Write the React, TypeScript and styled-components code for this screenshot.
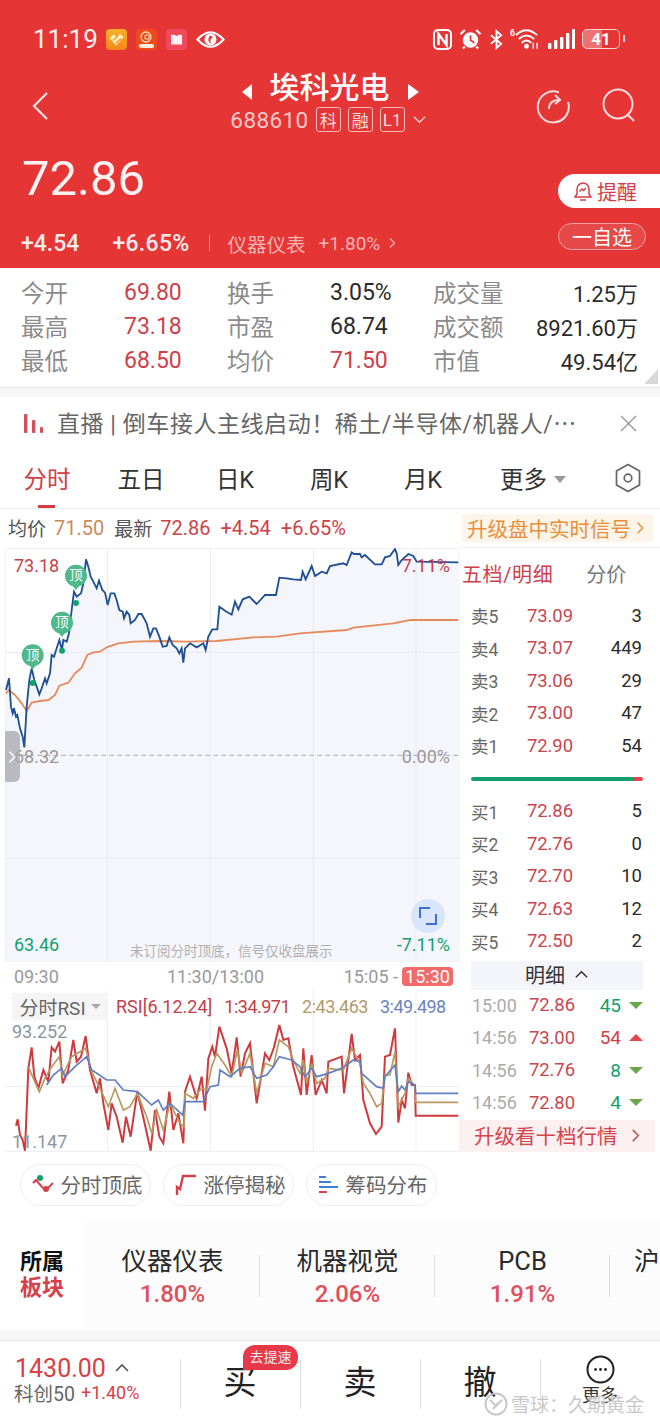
import React from "react";
import styled, { createGlobalStyle } from "styled-components";

const RED = "#e53535";
const UP = "#cf3f49";
const GREEN = "#13a06c";

const GlobalStyle = createGlobalStyle`
  html, body { margin: 0; padding: 0; background: #fff; }
  body { font-family: Roboto, "Noto Sans CJK SC", sans-serif; }
  * { box-sizing: border-box; }
`;

const Page = styled.div`
  position: relative;
  width: 660px;
  height: 1425px;
  overflow: hidden;
  background: #fff;
`;

/* ---- red header ---- */
const Header = styled.header`
  height: 268px;
  background: ${RED};
  color: #fff;
`;

const StatusBar = styled.div`
  height: 70px;
  padding: 8px 40px 0 33px;
  display: flex;
  align-items: center;
  justify-content: space-between;
`;

const StatusGroup = styled.div<{ $gap?: number }>`
  display: flex;
  align-items: center;
  gap: ${(p) => p.$gap ?? 9}px;
`;

const Clock = styled.span`
  font-size: 26px;
  color: #fdeeee;
  margin-right: -1px;
`;

const Battery = styled.div`
  position: relative;
  width: 38px;
  height: 20px;
  border: 1.5px solid #f8d5d5;
  border-radius: 5px;
  display: flex;
  align-items: center;
  justify-content: center;
  font-size: 17px;
  font-weight: 700;
  background: linear-gradient(90deg, rgba(255, 255, 255, 0.3) 52%, transparent 52%);
  &::after {
    content: "";
    position: absolute;
    right: -6px;
    top: 5px;
    width: 2px;
    height: 7px;
    background: #f8d5d5;
  }
`;

const NavRow = styled.div`
  height: 66px;
  display: grid;
  grid-template-columns: 200px 1fr 130px;
  align-items: center;
`;

const BackWrap = styled.div`
  padding-left: 32px;
  padding-top: 6px;
  display: flex;
`;

const TitleBlock = styled.div`
  display: flex;
  flex-direction: column;
  align-items: center;
  margin-left: -70px;
  margin-top: -3px;
`;

const TitleLine = styled.div`
  display: flex;
  align-items: center;
  gap: 18px;
  height: 36px;
  font-size: 30px;
  font-weight: 500;
  line-height: 36px;
`;

const Arrow = styled.span<{ $right?: boolean }>`
  width: 0;
  height: 0;
  margin-top: 8px;
  border-top: 8px solid transparent;
  border-bottom: 8px solid transparent;
  ${(p) => (p.$right ? "border-left: 11px solid #fff;" : "border-right: 10px solid #fff;")}
`;

const CodeLine = styled.div`
  display: flex;
  align-items: center;
  gap: 7px;
  height: 28px;
  margin-left: -3px;
  font-size: 22.5px;
  color: #f8c9c9;
  letter-spacing: 0.4px;
`;

const Tag = styled.span`
  display: inline-flex;
  align-items: center;
  justify-content: center;
  width: 25px;
  height: 25px;
  border: 1px solid #f5bcbc;
  border-radius: 3px;
  font-size: 17px;
  letter-spacing: 0;
  color: #fbdcdc;
`;

const NavIcons = styled.div`
  display: flex;
  justify-content: flex-end;
  gap: 30px;
  padding-right: 23px;
  padding-top: 6px;
`;

const QuoteRow = styled.div`
  display: flex;
  justify-content: space-between;
  height: 132px;
`;

const QuoteLeft = styled.div`
  padding-left: 21px;
  display: flex;
  flex-direction: column;
`;

const BigPrice = styled.div`
  height: 84px;
  font-size: 49px;
  line-height: 86px;
  padding-left: 1px;
  color: #fdf2f2;
`;

const ChangeLine = styled.div`
  display: flex;
  align-items: center;
  height: 46px;
  font-size: 23px;
  font-weight: 500;
  color: #fbeaea;
`;

const ChangeValue = styled.span`
  margin-right: 33px;
  &:nth-child(2) {
    margin-right: 19px;
    letter-spacing: 0.3px;
  }
`;

const Divider = styled.span`
  width: 1px;
  height: 16px;
  background: #f09a9a;
  margin-right: 18px;
`;

const SectorName = styled.span`
  font-size: 19.5px;
  font-weight: 400;
  color: #f6b4b4;
  margin-right: 13px;
`;

const SectorChange = styled.span`
  font-size: 19px;
  font-weight: 400;
  color: #f6b4b4;
  margin-right: 7px;
`;

const QuoteRight = styled.div`
  width: 102px;
  padding-top: 38px;
  display: flex;
  flex-direction: column;
`;

const RemindButton = styled.div`
  height: 34px;
  background: #fff;
  border-radius: 17px 0 0 17px;
  display: flex;
  align-items: center;
  padding-left: 15px;
  gap: 4px;
  font-size: 20px;
  color: #cf3f49;
`;

const WatchButton = styled.div`
  margin-top: 15px;
  width: 88px;
  height: 27px;
  border: 1px solid #f3a3a3;
  border-radius: 14px;
  background: rgba(255, 255, 255, 0.1);
  display: flex;
  align-items: center;
  justify-content: center;
  font-size: 20px;
  color: #fff;
`;

/* ---- stats table ---- */
const StatsGrid = styled.section`
  position: relative;
  height: 120px;
  padding: 7px 22px 0 21px;
  display: grid;
  grid-template-columns: 103px 103px 103px 103px auto 1fr;
  grid-auto-rows: 34px;
  align-items: center;
  border-bottom: 1px solid #e9e9e9;
`;

const StatLabel = styled.span`
  font-size: 23.5px;
  color: #8b8b8b;
`;

const StatValue = styled.span<{ $up?: boolean; $end?: boolean }>`
  font-size: ${(p) => (p.$end ? 22 : 23)}px;
  color: ${(p) => (p.$up ? UP : "#2b2b2b")};
  text-align: ${(p) => (p.$end ? "right" : "left")};
  white-space: nowrap;
`;

const CornerMark = styled.span`
  position: absolute;
  right: 2px;
  bottom: 3px;
  width: 14px;
  height: 15px;
  background: #d9d9d9;
  clip-path: polygon(100% 0, 100% 100%, 0 100%);
`;

const Band = styled.div<{ $h: number }>`
  height: ${(p) => p.$h}px;
  background: #f6f6f6;
`;

/* ---- live banner ---- */
const LiveBanner = styled.section`
  height: 53px;
  padding: 0 23px 0 24px;
  display: flex;
  align-items: center;
  font-size: 23px;
  color: #666;
`;

const LiveText = styled.span`
  margin-left: 14px;
  margin-top: -3px;
  flex: 1;
  white-space: nowrap;
  letter-spacing: 0.55px;
`;

/* ---- tabs ---- */
const Tabs = styled.nav`
  height: 59px;
  display: flex;
  align-items: stretch;
  border-bottom: 1px solid #ececec;
`;

const Tab = styled.div<{ $active?: boolean; $w?: number }>`
  position: relative;
  width: ${(p) => p.$w ?? 94}px;
  display: flex;
  align-items: center;
  justify-content: center;
  gap: 7px;
  padding-bottom: 2px;
  font-size: 23.5px;
  color: ${(p) => (p.$active ? "#d23d46" : "#333")};
  ${(p) =>
    p.$active &&
    `&::after {
      content: "";
      position: absolute;
      left: 38px;
      bottom: 0;
      width: 17px;
      height: 3px;
      background: #d23d46;
    }`}
`;

const MoreCaret = styled.span`
  width: 0;
  height: 0;
  border-left: 6px solid transparent;
  border-right: 6px solid transparent;
  border-top: 7px solid #999;
  margin-top: 2px;
`;

/* ---- quote summary strip ---- */
const InfoRow = styled.div`
  height: 39px;
  display: flex;
  align-items: center;
  padding: 0 7px 2px 8px;
`;

const InfoLabel = styled.span`
  font-size: 19px;
  color: #555;
  margin-right: 8px;
`;

const InfoValue = styled.span<{ $tone?: string }>`
  font-size: 20px;
  color: ${(p) => p.$tone ?? UP};
  margin-right: 10px;
`;

const SignalBanner = styled.div`
  margin-left: auto;
  width: 191px;
  height: 28px;
  background: #fdf4ea;
  display: flex;
  align-items: center;
  justify-content: center;
  gap: 3px;
  font-size: 20.5px;
  color: #e88f3a;
`;

/* ---- main split ---- */
const Main = styled.section`
  display: flex;
  height: 604px;
`;

const LeftColumn = styled.div`
  width: 460px;
  display: flex;
  flex-direction: column;
`;

const ChartBox = styled.div`
  position: relative;
  height: 414px;
`;

const PlotSvg = styled.svg`
  display: block;
  font-family: Roboto, "Noto Sans CJK SC", sans-serif;
`;

const AxisLabel = styled.span<{ $left?: number; $right?: number; $top: number; $tone: string }>`
  position: absolute;
  top: ${(p) => p.$top}px;
  ${(p) => (p.$left !== undefined ? `left: ${p.$left}px;` : `right: ${p.$right}px;`)}
  font-size: 18px;
  line-height: 20px;
  color: ${(p) => p.$tone};
`;

const ChartNote = styled.span`
  position: absolute;
  left: 130px;
  bottom: 2px;
  font-size: 13.5px;
  line-height: 18px;
  color: #b0b0b0;
  white-space: nowrap;
`;

const ExpandButton = styled.span`
  position: absolute;
  left: 411px;
  top: 351px;
  width: 34px;
  height: 34px;
  border-radius: 50%;
  background: #d8e5fa;
  display: flex;
  align-items: center;
  justify-content: center;
`;

const SideHandle = styled.span`
  position: absolute;
  left: 5px;
  top: 183px;
  width: 15px;
  height: 51px;
  border-radius: 0 6px 6px 0;
  background: rgba(170, 170, 178, 0.8);
  display: flex;
  align-items: center;
  justify-content: center;
`;

const TimeRow = styled.div`
  height: 28px;
  padding: 0 7px 0 14px;
  display: grid;
  grid-template-columns: 153px 1fr auto;
  align-items: center;
  font-size: 18px;
  color: #999;
`;

const TimeEnd = styled.span`
  display: flex;
  align-items: center;
  gap: 4px;
`;

const TimeBadge = styled.span`
  width: 51px;
  height: 19px;
  border-radius: 4px;
  background: #f36a6a;
  color: #fff;
  text-align: center;
  line-height: 19px;
`;

const RsiBox = styled.div`
  position: relative;
  height: 162px;
`;

const RsiLegend = styled.div`
  position: absolute;
  left: 12px;
  top: 3px;
  display: flex;
  align-items: center;
  font-size: 18px;
`;

const RsiSelect = styled.span`
  width: 96px;
  height: 27px;
  background: #f5f5f5;
  color: #666;
  font-size: 19px;
  display: flex;
  align-items: center;
  justify-content: center;
  gap: 5px;
  margin-right: 8px;
`;

const SmallCaret = styled.span`
  width: 0;
  height: 0;
  border-left: 5px solid transparent;
  border-right: 5px solid transparent;
  border-top: 5px solid #aaa;
`;

const LegendItem = styled.span<{ $tone: string; $tight?: boolean }>`
  color: ${(p) => p.$tone};
  margin-right: 12px;
  letter-spacing: ${(p) => (p.$tight ? "-0.5px" : "0")};
  white-space: nowrap;
`;

/* ---- order book column ---- */
const RightColumn = styled.div`
  width: 200px;
  display: flex;
  flex-direction: column;
  border-top: 1px solid #f2f2f2;
  margin-top: -1px;
`;

const BookTabs = styled.div`
  height: 52px;
  padding: 0 0 2px 2px;
  display: flex;
  align-items: center;
  gap: 33px;
`;

const BookTab = styled.span<{ $active?: boolean }>`
  font-size: 20px;
  color: ${(p) => (p.$active ? "#cf3f49" : "#777")};
  letter-spacing: ${(p) => (p.$active ? "0.6px" : "0")};
`;

const BookRow = styled.div`
  height: 32.5px;
  margin: 0 18px 0 12px;
  padding-bottom: 1px;
  display: grid;
  grid-template-columns: 55px 1fr auto;
  align-items: center;
`;

const BookLabel = styled.span`
  font-size: 17.5px;
  margin-left: -1px;
  color: #666;
`;

const BookPrice = styled.span`
  font-size: 18.5px;
  letter-spacing: -0.1px;
  color: #c9464f;
`;

const BookQty = styled.span`
  font-size: 18.5px;
  color: #2b2b2b;
`;

const RatioBar = styled.div`
  height: 4px;
  margin: 14px 17px 15px 11px;
  border-radius: 2px;
  background: linear-gradient(90deg, ${GREEN} 95%, #e0464f 95%);
`;

const DetailHeader = styled.div`
  height: 29px;
  margin: 3px 17px 0 11px;
  padding-bottom: 3px;
  background: #f4f5fb;
  display: flex;
  align-items: center;
  justify-content: center;
  gap: 9px;
  font-size: 20px;
  color: #333;
`;

const TradeRow = styled.div`
  height: 32.5px;
  margin: 0 17px 0 12px;
  padding-bottom: 2px;
  display: grid;
  grid-template-columns: 57px 1fr auto 22px;
  align-items: center;
`;

const TradeTime = styled.span`
  font-size: 18px;
  color: #aaa;
`;

const TradeQty = styled.span<{ $up?: boolean }>`
  font-size: 19px;
  color: ${(p) => (p.$up ? UP : GREEN)};
`;

const TradeMark = styled.span<{ $up?: boolean }>`
  justify-self: end;
  width: 0;
  height: 0;
  border-left: 7px solid transparent;
  border-right: 7px solid transparent;
  ${(p) => (p.$up ? "border-bottom: 7px solid #e8444c;" : "border-top: 7px solid #6aa84a;")}
`;

const UpgradeRow = styled.div`
  height: 32px;
  margin-top: auto;
  margin-right: 5px;
  margin-left: -1px;
  padding: 0 11px 2px 15px;
  background: #fdf0f1;
  display: flex;
  align-items: center;
  justify-content: space-between;
  font-size: 20.5px;
  color: #d2454e;
`;

/* ---- chips ---- */
const ChipRow = styled.div`
  height: 70px;
  padding: 12px 0 0 20px;
  display: flex;
  gap: 12px;
  align-items: flex-start;
`;

const Chip = styled.div`
  width: 131px;
  height: 42px;
  border: 1px solid #eeeeee;
  border-radius: 21px;
  display: flex;
  align-items: center;
  justify-content: center;
  gap: 7px;
  padding: 0 0 3px 3px;
  font-size: 20.5px;
  color: #666;
`;

/* ---- sector strip ---- */
const SectorStrip = styled.section`
  height: 108px;
  display: flex;
  overflow: hidden;
`;

const SectorHead = styled.div`
  width: 85px;
  padding: 27px 0 0 20px;
  font-size: 22px;
  line-height: 26px;
  font-weight: 700;
  color: #111;
`;

const SectorHeadAccent = styled.div`
  color: #d6404a;
`;

const SectorList = styled.div`
  flex: 1;
  display: flex;
  background: #fcfcfd;
  overflow: hidden;
`;

const SectorItem = styled.div`
  position: relative;
  flex: 0 0 175px;
  display: flex;
  flex-direction: column;
  align-items: center;
  padding-top: 22px;
  &:not(:last-child)::after {
    content: "";
    position: absolute;
    right: 0;
    top: 33px;
    width: 1px;
    height: 42px;
    background: #dddddd;
  }
`;

const SectorItemName = styled.div`
  height: 34px;
  font-size: 25.5px;
  line-height: 34px;
  color: #2a2a2a;
  white-space: nowrap;
`;

const SectorItemChange = styled.div`
  height: 32px;
  font-size: 24px;
  font-weight: 500;
  line-height: 32px;
  color: #e0505a;
`;

const LastSector = styled.div`
  flex: 1;
  padding: 22px 0 0 24px;
  font-size: 25.5px;
  line-height: 34px;
  color: #2a2a2a;
`;

/* ---- bottom bar ---- */
const BottomBar = styled.footer`
  height: 85px;
  display: flex;
  border-top: 1px solid #e8e8e8;
`;

const IndexBlock = styled.div`
  width: 180px;
  padding: 12px 0 0 15px;
`;

const IndexLine = styled.div`
  display: flex;
  align-items: center;
  gap: 8px;
  height: 30px;
  font-size: 25px;
  color: #d94040;
`;

const IndexSub = styled.div`
  display: flex;
  align-items: center;
  gap: 6px;
  height: 24px;
  margin: -3px 0 0 -1px;
  font-size: 19.5px;
  color: #666;
`;

const IndexChange = styled.span`
  font-size: 18px;
  color: #d6404a;
`;

const ActionCell = styled.div`
  position: relative;
  flex: 1;
  display: flex;
  flex-direction: column;
  align-items: center;
  justify-content: center;
  padding-bottom: 6px;
  font-size: 33px;
  color: #222;
  &::before {
    content: "";
    position: absolute;
    left: 0;
    top: 18px;
    width: 1px;
    height: 50px;
    background: #dedede;
  }
`;

const SpeedBadge = styled.span`
  position: absolute;
  left: 63px;
  top: 4px;
  width: 55px;
  height: 25px;
  border-radius: 12px 12px 12px 0;
  background: #e8394a;
  color: #fde8e8;
  font-size: 14px;
  line-height: 25px;
  text-align: center;
`;

const MoreLabel = styled.span`
  font-size: 18px;
  line-height: 20px;
  margin-top: 2px;
  color: #333;
`;

const Watermark = styled.div`
  position: absolute;
  left: 484px;
  bottom: 8px;
  display: flex;
  align-items: center;
  gap: 3px;
  font-size: 19px;
  color: rgba(190, 190, 190, 0.85);
  text-shadow: 0 0 2px #fff;
  white-space: nowrap;
`;

/* ---- data ---- */
const PRICE_LINE =
  "18,450 27,415 33,500 38,520 42,505 48,530 52,525 60,565 68,590 73,622 80,500 88,420 95,385 103,420 110,440 118,463 125,445 135,415 140,430 150,400 155,345 162,350 170,325 178,300 186,330 190,300 200,305 207,280 215,210 222,155 230,170 243,160 250,130 258,58 265,80 272,110 280,125 290,145 297,122 307,150 315,158 323,195 332,160 343,160 350,180 358,210 368,215 372,235 380,215 388,225 392,250 405,240 415,222 425,222 440,250 450,290 460,265 468,265 478,290 488,320 500,318 508,292 518,315 530,325 538,340 545,325 550,368 555,325 570,310 590,322 610,310 617,330 625,290 637,268 652,268 658,200 675,212 695,224 705,185 715,208 728,178 748,170 770,192 795,165 828,165 838,113 860,115 880,118 903,120 908,95 917,118 935,78 945,108 965,95 980,100 990,78 1030,70 1040,75 1055,37 1062,42 1080,42 1085,52 1095,45 1125,73 1145,73 1155,52 1170,48 1185,27 1190,40 1195,75 1205,60 1225,42 1240,48 1250,65 1375,67";

const AVG_LINE =
  "18,460 27,450 45,465 65,490 80,513 95,488 120,483 145,480 165,465 178,437 205,428 225,400 245,383 262,345 280,337 300,335 320,322 355,310 400,305 480,303 560,305 650,303 760,292 830,290 900,280 1040,270 1060,263 1180,250 1230,240 1375,240";

const RSI_RED =
  "48,497 53,478 60,525 68,540 75,572 85,325 95,262 103,350 115,385 130,330 145,365 155,262 165,275 178,245 188,370 205,330 220,240 230,305 243,290 257,228 270,330 290,400 300,355 310,430 325,510 335,430 350,470 368,548 378,470 392,530 412,395 425,450 452,572 465,450 478,530 490,550 508,395 520,510 535,460 550,550 555,395 570,350 590,415 605,350 615,452 625,295 637,260 645,290 658,200 680,265 695,340 710,232 722,350 735,280 750,250 770,430 795,280 808,300 822,262 838,195 850,240 865,235 880,320 903,405 910,265 920,405 935,285 947,405 965,360 980,400 985,305 1025,290 1032,400 1055,222 1065,300 1080,285 1090,420 1110,490 1128,522 1145,500 1155,290 1170,285 1185,205 1195,488 1205,420 1215,445 1225,338 1235,375 1245,375 1247,467 1375,467";

const RSI_TAN =
  "85,320 100,355 118,395 135,355 155,320 178,290 188,345 215,290 257,265 275,335 300,385 325,440 345,385 370,450 390,440 412,400 440,470 455,520 470,450 490,510 510,430 540,490 552,500 555,400 580,415 605,385 620,390 635,320 650,280 675,315 695,350 712,270 725,340 750,280 770,400 795,310 820,320 838,240 865,260 880,300 900,340 910,300 920,370 935,310 950,370 975,355 985,325 1030,330 1055,265 1080,310 1090,370 1110,400 1130,440 1145,430 1155,345 1170,345 1185,275 1195,440 1215,400 1225,355 1245,378 1247,427 1375,427";

const RSI_BLUE =
  "140,375 160,345 185,325 195,350 225,320 260,290 275,330 320,360 345,360 370,390 412,395 455,435 475,420 490,450 510,430 548,465 555,425 610,425 630,380 655,375 660,330 690,350 720,325 750,320 770,355 800,345 820,320 838,290 875,300 900,320 915,350 935,325 950,350 985,340 1025,325 1060,300 1080,305 1085,340 1130,380 1150,385 1155,350 1185,315 1195,395 1205,378 1215,390 1225,365 1245,375 1247,400 1375,400";

const GRID_X = [323, 631, 940, 1248];

const MARKERS = [
  { x: 228, y: 107, dot: 189 },
  { x: 186, y: 248, dot: 332 },
  { x: 98, y: 346, dot: 429 },
];

const STATS = [
  ["今开", "69.80", true, "换手", "3.05%", false, "成交量", "1.25万"],
  ["最高", "73.18", true, "市盈", "68.74", false, "成交额", "8921.60万"],
  ["最低", "68.50", true, "均价", "71.50", true, "市值", "49.54亿"],
] as const;

const ASKS = [
  ["卖5", "73.09", "3"],
  ["卖4", "73.07", "449"],
  ["卖3", "73.06", "29"],
  ["卖2", "73.00", "47"],
  ["卖1", "72.90", "54"],
];

const BIDS = [
  ["买1", "72.86", "5"],
  ["买2", "72.76", "0"],
  ["买3", "72.70", "10"],
  ["买4", "72.63", "12"],
  ["买5", "72.50", "2"],
];

const TRADES = [
  { time: "15:00", price: "72.86", qty: "45", up: false },
  { time: "14:56", price: "73.00", qty: "54", up: true },
  { time: "14:56", price: "72.76", qty: "8", up: false },
  { time: "14:56", price: "72.80", qty: "4", up: false },
];

const SECTORS = [
  ["仪器仪表", "1.80%"],
  ["机器视觉", "2.06%"],
  ["PCB", "1.91%"],
];

/* ---- icons ---- */
const Chevron = ({ size = 12, color = "#fff", dir = "right", sw = 1.6 }: { size?: number; color?: string; dir?: "right" | "down" | "up"; sw?: number }) => {
  const pts = dir === "right" ? "4,2 10,8 4,14" : dir === "down" ? "2,5 8,11 14,5" : "2,11 8,5 14,11";
  return (
    <svg width={size} height={size} viewBox="0 0 16 16" fill="none">
      <polyline points={pts} stroke={color} strokeWidth={sw} />
    </svg>
  );
};

const AppIcons = () => (
  <>
    <svg width="21" height="21" viewBox="0 0 21 21">
      <defs>
        <linearGradient id="orangeTile" x1="0" y1="0" x2="0" y2="1">
          <stop offset="0" stopColor="#fbb02a" />
          <stop offset="1" stopColor="#f4861a" />
        </linearGradient>
      </defs>
      <rect width="21" height="21" rx="4" fill="url(#orangeTile)" />
      <path d="M3.5 9 L8 5.5 L10.5 8 L14 5 L17.5 8 L10 16.5 Z" fill="#fff3c9" />
      <path d="M6.5 11.5 L12 7 M9.5 14.5 L15 9.5" stroke="#f59b1f" strokeWidth="1.5" />
    </svg>
    <svg width="21" height="21" viewBox="0 0 21 21">
      <rect width="21" height="21" rx="4" fill="#ef4a1c" />
      <circle cx="10" cy="8" r="5" fill="none" stroke="#ffd9b0" strokeWidth="1.3" />
      <circle cx="11" cy="8" r="2.2" fill="none" stroke="#ffd9b0" strokeWidth="1.1" />
      <rect x="3" y="15" width="15" height="4" rx="2" fill="#fff1da" />
    </svg>
    <svg width="21" height="21" viewBox="0 0 21 21">
      <rect width="21" height="21" rx="4" fill="#f1495c" />
      <path d="M5 6 Q8 5 10.5 7 Q13 5 16 6 V15.5 H5 Z" fill="#fdf0f0" />
    </svg>
    <svg width="29" height="21" viewBox="0 0 29 21">
      <path d="M1.5 10.5 Q14.5 -4 27.5 10.5 Q14.5 25 1.5 10.5 Z" fill="none" stroke="#fff" strokeWidth="2.2" />
      <circle cx="14.5" cy="10.5" r="6" fill="#fff" />
      <path d="M14 6.5 Q10 12 15 15 Q13 10 17 8 Z" fill={RED} />
    </svg>
  </>
);

const SystemIcons = () => (
  <>
    <svg width="19" height="21" viewBox="0 0 19 21">
      <rect x="1" y="1" width="17" height="19" rx="4" fill="none" stroke="#fff" strokeWidth="2" />
      <path d="M5.5 16 V5 L13.5 16 V5" fill="none" stroke="#fff" strokeWidth="2.4" />
    </svg>
    <svg width="23" height="22" viewBox="0 0 24 22">
      <circle cx="12" cy="12" r="8" fill="#fff" />
      <path d="M12 7 V12 L16 15" fill="none" stroke={RED} strokeWidth="1.8" />
      <path d="M1.5 6 L6 1.5 M22.5 6 L18 1.5 M6 19 L4 21 M18 19 L20 21" stroke="#fff" strokeWidth="2.2" />
    </svg>
    <svg width="13" height="21" viewBox="0 0 14 21">
      <path d="M1 6 L12 15 L7 19.5 V1.5 L12 6 L1 15" fill="none" stroke="#fff" strokeWidth="2" />
    </svg>
    <svg width="30" height="22" viewBox="0 0 31 22">
      <text x="0" y="8" fontSize="9" fill="#fff" fontWeight="700">6</text>
      <path d="M6 7 Q17 -3 28 7 M9 11 Q17 4 25 11 M12 15 Q17 10 22 15" fill="none" stroke="#fff" strokeWidth="2" />
      <circle cx="17" cy="18.5" r="2.5" fill="#fff" />
      <path d="M24 15 V21 M28 15 V21" stroke="#fff" strokeWidth="1.4" />
    </svg>
    <svg width="27" height="21" viewBox="0 0 27 21">
      <rect x="0" y="14" width="3.4" height="6" rx="1" fill="#fff" />
      <rect x="6" y="11" width="3.4" height="9" rx="1" fill="#fff" />
      <rect x="12" y="8" width="3.4" height="12" rx="1" fill="#fff" />
      <rect x="18" y="4" width="3.4" height="16" rx="1" fill="#fff" />
      <rect x="24" y="0" width="3" height="20" rx="1" fill="#fff" />
    </svg>
  </>
);

const BackIcon = () => (
  <svg width="18" height="30" viewBox="0 0 18 30" fill="none">
    <polyline points="15,2 2,15 15,28" stroke="#fbe3e3" strokeWidth="2.2" />
  </svg>
);

const ShareIcon = () => (
  <svg width="36" height="36" viewBox="0 0 36 36" fill="none" stroke="#fbdcdc" strokeWidth="2">
    <path d="M24 4.5 A15.5 15.5 0 1 0 33 14" />
    <path d="M14 21 Q14 12 24 12" />
    <polyline points="20,7 25,12 20,16" />
  </svg>
);

const SearchIcon = () => (
  <svg width="36" height="36" viewBox="0 0 36 36" fill="none" stroke="#fbdcdc" strokeWidth="2">
    <circle cx="17" cy="16" r="14.5" />
    <path d="M27 27 L33 33" />
  </svg>
);

const BellIcon = () => (
  <svg width="20" height="22" viewBox="0 0 20 22" fill="none" stroke="#cf3f49" strokeWidth="1.5">
    <path d="M4 14 V9 A6 6 0 0 1 16 9 V14 L18 17 H2 Z" />
    <path d="M7 20 H13" />
    <path d="M6.5 11.5 L9 9 L10.5 10.5 L13 8" />
  </svg>
);

const HexIcon = () => (
  <svg width="26" height="30" viewBox="0 0 26 30" fill="none" stroke="#666" strokeWidth="1.7">
    <path d="M13 1.5 L24.5 8 V22 L13 28.5 L1.5 22 V8 Z" strokeLinejoin="round" />
    <circle cx="13" cy="15" r="3.8" />
  </svg>
);

const LiveBars = () => (
  <svg width="19" height="19" viewBox="0 0 19 19" fill="#d2505a">
    <rect x="0" y="0" width="3.4" height="19" rx="1" />
    <rect x="8" y="6" width="3.4" height="13" rx="1" />
    <rect x="16" y="13" width="3" height="6" rx="1" />
  </svg>
);

const CloseIcon = () => (
  <svg width="17" height="17" viewBox="0 0 17 17" stroke="#999" strokeWidth="1.4">
    <path d="M1 1 L16 16 M16 1 L1 16" />
  </svg>
);

const ExpandIcon = () => (
  <svg width="18" height="18" viewBox="0 0 18 18" fill="none" stroke="#3f6fd0" strokeWidth="2">
    <polyline points="1,11 1,1 11,1" />
    <polyline points="7,17 17,17 17,7" />
  </svg>
);

const TurnIcon = () => (
  <svg width="22" height="18" viewBox="0 0 22 18" fill="none" strokeWidth="2">
    <path d="M1 8 L4 5 L10 12 L14 15 L21 8" stroke="#d6404a" />
    <circle cx="8" cy="3" r="3" fill="#13a06c" stroke="none" />
    <circle cx="14" cy="14" r="3" fill="#d6404a" stroke="none" />
  </svg>
);

const LimitIcon = () => (
  <svg width="22" height="24" viewBox="0 0 22 24" fill="none" stroke="#d6404a" strokeWidth="2.4">
    <path d="M2 23 V15 L5 17 L8 4 H21" />
  </svg>
);

const ChipsIcon = () => (
  <svg width="20" height="18" viewBox="0 0 20 18" strokeWidth="2">
    <path d="M0 2 H7" stroke="#3b7fd6" />
    <path d="M0 7 H12" stroke="#3b7fd6" />
    <path d="M0 12 H19" stroke="#3b7fd6" />
    <path d="M0 17 H8" stroke="#d6404a" />
  </svg>
);

const MoreIcon = () => (
  <svg width="29" height="29" viewBox="0 0 29 29" fill="none">
    <circle cx="14.5" cy="14.5" r="13" stroke="#222" strokeWidth="2" />
    <circle cx="9.5" cy="14.5" r="1.4" fill="#222" />
    <circle cx="14.5" cy="14.5" r="1.4" fill="#222" />
    <circle cx="19.5" cy="14.5" r="1.4" fill="#222" />
  </svg>
);

const SnowLogo = () => (
  <svg width="24" height="24" viewBox="0 0 24 24" fill="none" stroke="rgba(190,190,190,0.85)" strokeWidth="2">
    <circle cx="12" cy="12" r="10.5" />
    <path d="M6 8 L12 14 L18 8 M9 17 L14 11" />
  </svg>
);

const PriceChart = () => (
  <PlotSvg width="460" height="414" viewBox="0 24 1380 1242">
    <polygon points={`${PRICE_LINE} 1375,1264 18,1264`} fill="#f5f6fc" />
    <rect x="16" y="25" width="1361" height="1240" fill="none" stroke="#f0f1f4" strokeWidth="3" />
    {GRID_X.map((x) => (
      <line key={x} x1={x} x2={x} y1="25" y2="1265" stroke="#e8eaef" strokeWidth="3" />
    ))}
    <line x1="16" x2="1377" y1="337" y2="337" stroke="#e8eaef" strokeWidth="3" />
    <line x1="16" x2="1377" y1="954" y2="954" stroke="#e8eaef" strokeWidth="3" />
    <line x1="16" x2="1377" y1="646" y2="646" stroke="#aaa" strokeWidth="3" strokeDasharray="14 10" />
    <polyline points={AVG_LINE} fill="none" stroke="#e68a5c" strokeWidth="5.5" />
    <polyline points={PRICE_LINE} fill="none" stroke="#1f4f94" strokeWidth="5.5" />
    {MARKERS.map((m) => (
      <g key={m.x}>
        <circle cx={m.x} cy={m.y} r="33" fill="#4fb98b" />
        <polygon points={`${m.x - 10},${m.y + 30} ${m.x + 10},${m.y + 30} ${m.x},${m.y + 43}`} fill="#4fb98b" />
        <text x={m.x} y={m.y + 14} fontSize="40" fill="#fff" textAnchor="middle">顶</text>
        <circle cx={m.x} cy={m.dot} r="9" fill="#12a26b" />
      </g>
    ))}
  </PlotSvg>
);

const RsiChart = () => (
  <PlotSvg width="460" height="162" viewBox="0 90 1380 486">
    {GRID_X.map((x) => (
      <line key={x} x1={x} x2={x} y1="90" y2="576" stroke="#eeeff2" strokeWidth="3" />
    ))}
    <line x1="16" x2="1377" y1="380" y2="380" stroke="#eeeff2" strokeWidth="3" />
    <line x1="16" x2="1377" y1="576" y2="576" stroke="#e6e8ec" strokeWidth="4" />
    <polyline points={RSI_RED} fill="none" stroke="#cf3a3e" strokeWidth="6" />
    <polyline points={RSI_TAN} fill="none" stroke="#b79a62" strokeWidth="5" />
    <polyline points={RSI_BLUE} fill="none" stroke="#5f7fc4" strokeWidth="5" />
  </PlotSvg>
);

export default function App() {
  return (
    <Page>
      <GlobalStyle />
      <Header>
        <StatusBar>
          <StatusGroup>
            <Clock>11:19</Clock>
            <AppIcons />
          </StatusGroup>
          <StatusGroup $gap={7.5}>
            <SystemIcons />
            <Battery>41</Battery>
          </StatusGroup>
        </StatusBar>
        <NavRow>
          <BackWrap>
            <BackIcon />
          </BackWrap>
          <TitleBlock>
            <TitleLine>
              <Arrow />
              埃科光电
              <Arrow $right />
            </TitleLine>
            <CodeLine>
              688610
              <Tag>科</Tag>
              <Tag>融</Tag>
              <Tag>L1</Tag>
              <Chevron size={15} dir="down" color="#f8c9c9" />
            </CodeLine>
          </TitleBlock>
          <NavIcons>
            <ShareIcon />
            <SearchIcon />
          </NavIcons>
        </NavRow>
        <QuoteRow>
          <QuoteLeft>
            <BigPrice>72.86</BigPrice>
            <ChangeLine>
              <ChangeValue>+4.54</ChangeValue>
              <ChangeValue>+6.65%</ChangeValue>
              <Divider />
              <SectorName>仪器仪表</SectorName>
              <SectorChange>+1.80%</SectorChange>
              <Chevron size={12} color="#f6b4b4" />
            </ChangeLine>
          </QuoteLeft>
          <QuoteRight>
            <RemindButton>
              <BellIcon />
              提醒
            </RemindButton>
            <WatchButton>一自选</WatchButton>
          </QuoteRight>
        </QuoteRow>
      </Header>

      <StatsGrid>
        {STATS.map((r) => (
          <React.Fragment key={r[0]}>
            <StatLabel>{r[0]}</StatLabel>
            <StatValue $up={r[2]}>{r[1]}</StatValue>
            <StatLabel>{r[3]}</StatLabel>
            <StatValue $up={r[5]}>{r[4]}</StatValue>
            <StatLabel>{r[6]}</StatLabel>
            <StatValue $end>{r[7]}</StatValue>
          </React.Fragment>
        ))}
        <CornerMark />
      </StatsGrid>
      <Band $h={9} />

      <LiveBanner>
        <LiveBars />
        <LiveText>直播 | 倒车接人主线启动！稀土/半导体/机器人/⋯</LiveText>
        <CloseIcon />
      </LiveBanner>

      <Tabs>
        <Tab $active>分时</Tab>
        <Tab>五日</Tab>
        <Tab>日K</Tab>
        <Tab>周K</Tab>
        <Tab>月K</Tab>
        <Tab $w={126}>
          更多
          <MoreCaret />
        </Tab>
        <Tab $w={64}>
          <HexIcon />
        </Tab>
      </Tabs>

      <InfoRow>
        <InfoLabel>均价</InfoLabel>
        <InfoValue $tone="#c98a5a">71.50</InfoValue>
        <InfoLabel>最新</InfoLabel>
        <InfoValue>72.86</InfoValue>
        <InfoValue>+4.54</InfoValue>
        <InfoValue>+6.65%</InfoValue>
        <SignalBanner>
          升级盘中实时信号
          <Chevron size={14} color="#e88f3a" />
        </SignalBanner>
      </InfoRow>

      <Main>
        <LeftColumn>
          <ChartBox>
            <PriceChart />
            <AxisLabel $left={14} $top={8} $tone="#c8404b">73.18</AxisLabel>
            <AxisLabel $right={10} $top={8} $tone="#c8404b">7.11%</AxisLabel>
            <AxisLabel $left={14} $top={199} $tone="#999">68.32</AxisLabel>
            <AxisLabel $right={10} $top={199} $tone="#999">0.00%</AxisLabel>
            <AxisLabel $left={14} $top={387} $tone={GREEN}>63.46</AxisLabel>
            <AxisLabel $right={10} $top={387} $tone={GREEN}>-7.11%</AxisLabel>
            <ChartNote>未订阅分时顶底，信号仅收盘展示</ChartNote>
            <ExpandButton>
              <ExpandIcon />
            </ExpandButton>
            <SideHandle>
              <Chevron size={14} />
            </SideHandle>
          </ChartBox>
          <TimeRow>
            <span>09:30</span>
            <span>11:30/13:00</span>
            <TimeEnd>
              15:05 -<TimeBadge>15:30</TimeBadge>
            </TimeEnd>
          </TimeRow>
          <RsiBox>
            <RsiChart />
            <RsiLegend>
              <RsiSelect>
                分时RSI
                <SmallCaret />
              </RsiSelect>
              <LegendItem $tone="#c2404a">RSI[6.12.24]</LegendItem>
              <LegendItem $tone="#c2404a" $tight>1:34.971</LegendItem>
              <LegendItem $tone="#b29a6a" $tight>2:43.463</LegendItem>
              <LegendItem $tone="#6a82c0" $tight>3:49.498</LegendItem>
            </RsiLegend>
            <AxisLabel $left={12} $top={32} $tone="#8a96a0">93.252</AxisLabel>
            <AxisLabel $left={12} $top={142} $tone="#8a96a0">11.147</AxisLabel>
          </RsiBox>
        </LeftColumn>

        <RightColumn>
          <BookTabs>
            <BookTab $active>五档/明细</BookTab>
            <BookTab>分价</BookTab>
          </BookTabs>
          {ASKS.map((r) => (
            <BookRow key={r[0]}>
              <BookLabel>{r[0]}</BookLabel>
              <BookPrice>{r[1]}</BookPrice>
              <BookQty>{r[2]}</BookQty>
            </BookRow>
          ))}
          <RatioBar />
          {BIDS.map((r) => (
            <BookRow key={r[0]}>
              <BookLabel>{r[0]}</BookLabel>
              <BookPrice>{r[1]}</BookPrice>
              <BookQty>{r[2]}</BookQty>
            </BookRow>
          ))}
          <DetailHeader>
            明细
            <Chevron size={15} dir="up" color="#333" />
          </DetailHeader>
          {TRADES.map((t) => (
            <TradeRow key={t.price}>
              <TradeTime>{t.time}</TradeTime>
              <BookPrice>{t.price}</BookPrice>
              <TradeQty $up={t.up}>{t.qty}</TradeQty>
              <TradeMark $up={t.up} />
            </TradeRow>
          ))}
          <UpgradeRow>
            升级看十档行情
            <Chevron size={15} color="#b5545a" />
          </UpgradeRow>
        </RightColumn>
      </Main>

      <ChipRow>
        <Chip>
          <TurnIcon />
          分时顶底
        </Chip>
        <Chip>
          <LimitIcon />
          涨停揭秘
        </Chip>
        <Chip>
          <ChipsIcon />
          筹码分布
        </Chip>
      </ChipRow>

      <SectorStrip>
        <SectorHead>
          所属
          <SectorHeadAccent>板块</SectorHeadAccent>
        </SectorHead>
        <SectorList>
          {SECTORS.map((s) => (
            <SectorItem key={s[0]}>
              <SectorItemName>{s[0]}</SectorItemName>
              <SectorItemChange>{s[1]}</SectorItemChange>
            </SectorItem>
          ))}
          <LastSector>沪</LastSector>
        </SectorList>
      </SectorStrip>
      <Band $h={10} />

      <BottomBar>
        <IndexBlock>
          <IndexLine>
            1430.00
            <Chevron size={16} dir="up" color="#555" />
          </IndexLine>
          <IndexSub>
            科创50
            <IndexChange>+1.40%</IndexChange>
          </IndexSub>
        </IndexBlock>
        <ActionCell>
          买<SpeedBadge>去提速</SpeedBadge>
        </ActionCell>
        <ActionCell>卖</ActionCell>
        <ActionCell>撤</ActionCell>
        <ActionCell>
          <MoreIcon />
          <MoreLabel>更多</MoreLabel>
        </ActionCell>
      </BottomBar>

      <Watermark>
        <SnowLogo />
        雪球：久期黄金
      </Watermark>
    </Page>
  );
}
